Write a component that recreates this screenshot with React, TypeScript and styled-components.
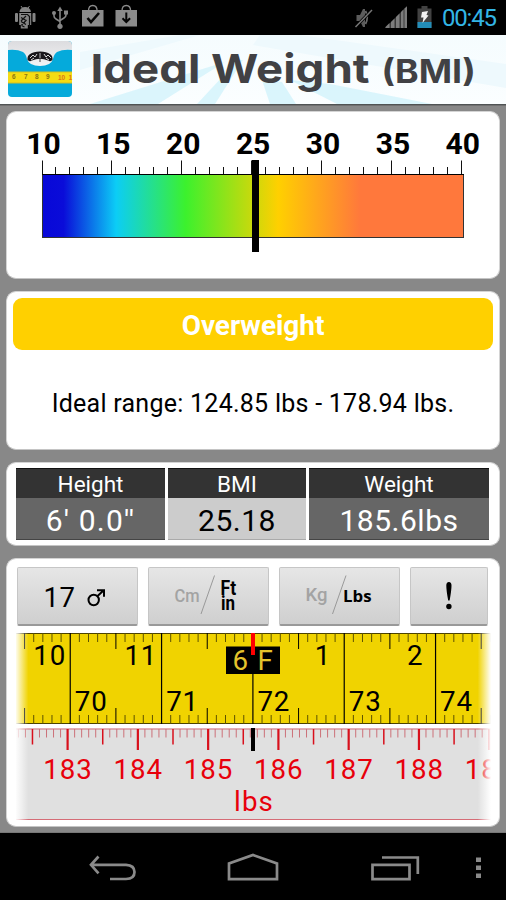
import React from "react";
import styled, { createGlobalStyle, css } from "styled-components";

const Global = createGlobalStyle`
  * { box-sizing: border-box; }
  body { margin: 0; background: #000; font-family: Roboto, "Noto Sans", sans-serif; }
  svg { display: block; flex: none; }
`;

const Screen = styled.div`
  width: 506px;
  height: 900px;
  display: flex;
  flex-direction: column;
  overflow: hidden;
  background: #000;
`;

const StatusBar = styled.header`
  height: 35px;
  flex: none;
  display: flex;
  justify-content: space-between;
`;

const Clock = styled.span`
  font-size: 24px;
  line-height: 36px;
  letter-spacing: -1.2px;
  color: #33b5e5;
  width: 64px;
`;

const StatusGroup = styled.div`
  display: flex;
`;

const TitleBar = styled.div`
  height: 70px;
  flex: none;
`;

const Content = styled.main`
  height: 728px;
  flex: none;
  background: #888;
  border-top: 1px solid #707070;
  border-bottom: 1px solid #777;
  padding: 5px 6px 0;
  display: flex;
  flex-direction: column;
  gap: 12px;
`;

const Panel = styled.section<{ $height: number }>`
  height: ${(p) => p.$height}px;
  flex: none;
  background: #fff;
  border: 1px solid #d4d4d4;
  border-bottom-color: #c4c4c4;
  border-radius: 10px;
  overflow: hidden;
`;

const Verdict = styled.div`
  margin: 6px 6px 0;
  height: 52px;
  border-radius: 9px;
  background: #ffd000;
  color: #fff;
  font-size: 28px;
  font-weight: 700;
  line-height: 56px;
  letter-spacing: -0.05px;
  text-align: center;
`;

const RangeText = styled.p`
  margin: 39px 0 0;
  font-size: 25px;
  line-height: 30px;
  letter-spacing: 0.26px;
  text-align: center;
  white-space: nowrap;
  color: #000;
`;

const Readings = styled.div`
  display: grid;
  grid-template-columns: 149px 138px 180px;
  column-gap: 3px;
  padding: 5px 0 0 9px;
`;

const Reading = styled.div<{ $light?: boolean }>`
  height: 72px;
  text-align: center;
  border-bottom: 1px solid #444;
  background: ${(p) => (p.$light ? "#ccc" : "#666")};
  color: ${(p) => (p.$light ? "#000" : "#fff")};
  ${(p) => p.$light && css`border-bottom-color: #aaa;`}
`;

const ReadingLabel = styled.div`
  height: 30px;
  background: #333;
  border-top: 1px solid #111;
  color: #fff;
  font-size: 22.5px;
  line-height: 31px;
`;

const ReadingValue = styled.div<{ $spacing: number }>`
  font-size: 30px;
  line-height: 46px;
  letter-spacing: ${(p) => p.$spacing}px;
`;

const Buttons = styled.div`
  display: grid;
  grid-template-columns: 121px 121px 121px 78px;
  column-gap: 10px;
  padding: 8px 0 0 10px;
  height: 73px;
`;

const Button = styled.button`
  height: 59px;
  padding: 0;
  border: 1px solid #c6c6c6;
  border-bottom: 2px solid #999;
  border-radius: 2px;
  background: linear-gradient(#e6e6e6, #cfcfcf);
  font-family: inherit;
`;

const Rulers = styled.div`
  padding-left: 9px;
  display: flex;
  flex-direction: column;
  gap: 3px;
`;

const NavBar = styled.nav`
  height: 67px;
  flex: none;
`;

const range = (n: number) => Array.from({ length: n }, (_, i) => i);

type LabelProps = React.SVGProps<SVGTextElement> & { left: number; base: number; stretch?: number };

/* Text with its baseline start at (left, base), stretched horizontally. */
const Label = ({ left, base, stretch = 1, ...rest }: LabelProps) => (
  <text transform={`translate(${left} ${base}) scale(${stretch} 1)`} {...rest} />
);

const StatusIcons = () => (
  <svg width="150" height="35" viewBox="0 0 150 35">
    <g fill="#858585" stroke="#858585">
      <path d="M19.500 12a5.700 5 0 0 1 11.400 0z" stroke="none" />
      <path d="M21 6l2 3M29.500 6l-2 3" strokeWidth="1" />
      <rect x="15" y="13" width="3" height="9" rx="1" stroke="none" />
      <rect x="32.500" y="13" width="3" height="9" rx="1" stroke="none" />
      <path d="M19.200 13h12v12H27.800v3.500h-7V25h-1.600z" stroke="none" />
      <path d="M21 14.500h6.500l2 2V27M21 17.500l5 3M21 21.500l5 3M26 16l-5 5M26.500 20l-5 5M21.500 25.500l3 1.500" fill="none" stroke="#101010" strokeWidth="1.200" />
      <path d="M60 9v17M54 12v4q0 2 2 3l4 2.500M66 12v3q0 2-2 3l-4 2.500" fill="none" strokeWidth="1.600" />
      <path d="M57.300 11L60 6.500l2.700 4.500z" stroke="none" />
      <circle cx="54" cy="13" r="2" stroke="none" />
      <rect x="64" y="10.500" width="4" height="4" stroke="none" />
      <circle cx="60" cy="26.300" r="2.600" stroke="none" />
    </g>
    {[82, 115.5].map((x) => (
      <g key={x}>
        <rect x={x} y="10" width="21.500" height="16.500" fill="#8b8b8b" />
        <path d={`M${x + 6.5} 11q0-5.500 4.300-5.500t4.300 5.500`} fill="none" stroke="#8b8b8b" strokeWidth="1.3" />
      </g>
    ))}
    <path d="M87.500 18l3.500 4 8-9" fill="none" stroke="#050505" strokeWidth="2.600" />
    <path d="M126.300 12.500v8.500M122.500 18.300l3.800 3.700 3.800-3.700" fill="none" stroke="#050505" strokeWidth="2" />
  </svg>
);

const SignalIcons = () => (
  <svg width="92" height="35" viewBox="350 0 92 35">
    <path d="M356.500 15h3.500l3-6h2v18h-2l-3-6h-3.500z" fill="#5c5c5c" />
    <path d="M365.500 11q3.500 6.500 0 13" fill="none" stroke="#6a6a6a" strokeWidth="1.800" />
    <path d="M355.500 27L372 10" stroke="#000" strokeWidth="3" />
    <path d="M355.500 27L372 10" stroke="#777" strokeWidth="1.500" />
    <path d="M385 28L407 6v22z" fill="#3a3a3a" />
    <path d="M385.500 28v-1l4-4v5zM391 28v-6l3.500-3.500V28zM396 28V17l3.500-3.500V28zM401 28V12l2.500-2.500V28zM404.500 28V8.500L407 6.500V28z" fill="#7c7c7c" />
    <path d="M417.500 8.500h4V6h6v2.500h4V28h-14z" fill="#424242" />
    <rect x="417.500" y="22" width="14" height="6" fill="#238db8" />
    <path d="M422 12l6-1-1.500 4 2 .5-6 7.500 1-5.500h-2.500z" fill="#f2f2f2" />
  </svg>
);

const TitleArt = () => (
  <svg width="506" height="70" viewBox="0 35 506 70">
    <defs>
      <linearGradient id="sky" x1="0" y1="0" x2="0" y2="1">
        <stop offset="0" stopColor="#f5fcfe" />
        <stop offset="1" stopColor="#fbfeff" />
      </linearGradient>
      <linearGradient id="scaleTop" x1="0" y1="0" x2="0" y2="1">
        <stop offset="0" stopColor="#dcdcdf" />
        <stop offset="1" stopColor="#f4f4f5" />
      </linearGradient>
      <clipPath id="scaleClip"><rect x="8" y="41" width="64" height="56" rx="4" /></clipPath>
    </defs>
    <rect y="35" width="506" height="70" fill="url(#sky)" />
    <path d="M225 62L90 104h68l70-44z" fill="#d3f3fb" opacity=".8" />
    <path d="M238 60L197 104h18L243 60zM262 80l8 24h26L282 82zM290 80L337 104h95L330 84z" fill="#d3f3fb" opacity=".85" />
    <path d="M200 35L80 70V52L180 35zM253 45L506 88V64L300 35h-40z" fill="#eef9fd" />
    <g clipPath="url(#scaleClip)">
      <rect x="8" y="41" width="64" height="56" fill="#05aadb" />
      <path d="M8 41h64v9q-9-1-15 2-3 2-4 7-2 7-13 7t-13-7q-1-5-4-7-6-3-15-2z" fill="url(#scaleTop)" />
      <path d="M27.500 60q-1-8 12.500-8.500 13.500.5 12.500 8.500-2 2-4.500.5-8-3.500-16 0-2.500 1.500-4.500-.5z" fill="#1a171b" />
      <path d="M30 58l3-3 2 2 2-3M44 54l2 3 2-2 3 3M31 60l3-2M46 58l3 2" fill="none" stroke="#eee" strokeWidth=".9" />
      <path d="M40 53v5" stroke="#eee" strokeWidth=".8" />
      <path d="M40 58v4" stroke="#222" strokeWidth=".8" />
      <rect x="8" y="72" width="64" height="11" fill="#f5dc14" />
      <path d="M8 72h64M8 83h64" stroke="#d2bd22" strokeWidth="1" />
    </g>
    <g fontFamily="Liberation Sans" fontWeight="700" fontSize="6.500" fill="#8b7615">
      <text x="12" y="79">6</text><text x="24" y="79">7</text><text x="35" y="79">8</text><text x="46" y="79">9</text>
      <text x="58" y="79.500" fill="#dc761b">10</text><text x="68.500" y="79.500" fill="#dc761b">1</text>
    </g>
    <g fontFamily="Inter, sans-serif" fontWeight="700" fill="#414144" style={{ fontFeatureSettings: '"cv11"' }}>
      <Label left={90.5} base={83.3} stretch={1.14} fontSize="40">Ideal Weight</Label>
      <Label left={381.5} base={83.3} stretch={1.12} fontSize="32">(BMI)</Label>
    </g>
    <path d="M0 104.500h506" stroke="#4f5354" strokeWidth="1" />
  </svg>
);

const BmiScale = () => (
  <svg width="492" height="166" viewBox="7 112 492 166">
    <defs>
      <linearGradient id="bmi" x1="0" x2="1" y1="0" y2="0">
        <stop offset="0" stopColor="#0808d8" />
        <stop offset=".05" stopColor="#0a0cd9" />
        <stop offset=".175" stopColor="#0ccdf6" />
        <stop offset=".34" stopColor="#3cf12d" />
        <stop offset=".56" stopColor="#ffd000" />
        <stop offset=".755" stopColor="#ff783c" />
        <stop offset="1" stopColor="#ff783c" />
      </linearGradient>
    </defs>
    {range(7).map((i) => (
      <text key={i} x={43.4 + i * 69.9} y="154" fontSize="30" fontWeight="700" textAnchor="middle">{10 + i * 5}</text>
    ))}
    <rect x="42.500" y="174.500" width="421" height="63" fill="url(#bmi)" stroke="#333" strokeWidth="1" />
    <path d="M42 174.500h422" stroke="#000" strokeWidth="1.200" />
    {range(31).map((i) => (
      <path key={i} d={`M${Math.floor(43 + i * 13.97) - 0.5} ${i % 5 ? 167 : 160.5}V174`} stroke="#111" strokeWidth="1" />
    ))}
    <rect x="252" y="160" width="7" height="92" />
  </svg>
);

const RulerFade = ({ id, y }: { id: string; y: number }) => (
  <>
    <defs>
      <linearGradient id={id} x1="0" x2="1" y1="0" y2="0">
        <stop offset="0" stopColor="#fff" />
        <stop offset=".028" stopColor="#fff" stopOpacity="0" />
        <stop offset=".972" stopColor="#fff" stopOpacity="0" />
        <stop offset="1" stopColor="#fff" />
      </linearGradient>
    </defs>
    <rect x="15" y={y} width="476" height="94" fill={`url(#${id})`} />
  </>
);

const HeightTape = () => (
  <svg width="475" height="93" viewBox="16 632 475 93">
    <rect x="16" y="633" width="475" height="91" fill="#f0d300" />
    <path d="M16 633.500h475M16 723.500h475" stroke="#4b4200" strokeWidth="1" />
    {range(53).map((i) => {
      const k = i - 26;
      const x = 252.900 + k * 9.133;
      if (k % 10 === 0) return <path key={i} d={`M${x} 633V724`} stroke="#000" strokeWidth="1.200" />;
      const l = k % 5 === 0 ? 16 : 9;
      return <path key={i} d={`M${x} 633v${l}M${x} 724v${-l}`} stroke={l === 16 ? "#000" : "#5d5200"} strokeWidth="1" />;
    })}
    <g fontSize="27.700" letterSpacing=".8">
      <text x="33.300" y="665">10</text>
      <text x="124.500" y="665">11</text>
      <text x="314.800" y="665">1</text>
      <text x="407" y="665">2</text>
      {range(5).map((i) => (
        <text key={i} x={74.800 + i * 91.330} y="710.700">{70 + i}</text>
      ))}
    </g>
    <rect x="226" y="646.500" width="54" height="27.500" />
    <g fontSize="27.700" fill="#e4c32c">
      <text x="232.500" y="669.500">6</text>
      <text x="257.500" y="669.500">F</text>
    </g>
    <rect x="251" y="633" width="4" height="22" fill="#f00" />
    <RulerFade id="tapeFade" y={632} />
  </svg>
);

const WeightRuler = () => (
  <svg width="475" height="92" viewBox="16 728 475 92">
    <rect x="16" y="728.500" width="475" height="91" fill="#e0e0e0" />
    <path d="M16 729h475M16 819.500h475" stroke="#d56c76" strokeWidth="1" />
    {range(69).map((i) => {
      const k = i - 7;
      const x = 67.600 + k * 7.027;
      const l = k % 10 === 0 ? 21 : k % 5 === 0 ? 15.500 : 8.500;
      return <path key={i} d={`M${x} 729v${l}`} stroke={l > 9 ? "#d8101c" : "#cc7078"} strokeWidth={l === 21 ? 2.2 : l > 9 ? 1.500 : 1} />;
    })}
    <g fontSize="27.700" fill="#e8000b" textAnchor="middle" letterSpacing="1">
      {range(7).map((i) => (
        <text key={i} x={68 + i * 70.270} y="778.700">{183 + i}</text>
      ))}
      <text x="254" y="810.500" letterSpacing="1.100">lbs</text>
    </g>
    <rect x="251" y="728" width="4" height="23" />
    <RulerFade id="weightFade" y={727} />
  </svg>
);

const Male = () => (
  <svg width="119" height="56" viewBox="18 568 119 56">
    <text x="43.500" y="606.500" fontSize="27.500" letterSpacing=".6">17</text>
    <circle cx="93.700" cy="600" r="5.200" fill="none" stroke="#000" strokeWidth="2" />
    <path d="M97.300 596.300L103.500 590.500M97 590.300h7v6.500" fill="none" stroke="#000" strokeWidth="2" />
  </svg>
);

const HeightUnits = () => (
  <svg width="119" height="56" viewBox="149 568 119 56">
    <Label left={174.5} base={601.5} stretch={0.89} fontSize="18.500" fontWeight="500" fill="#a3a3a3">Cm</Label>
    <path d="M201 614l13.500-38.500" stroke="#999" strokeWidth="1" />
    <Label left={220.5} base={595} stretch={0.9} fontSize="19.500" fontWeight="700">Ft</Label>
    <Label left={221} base={610} stretch={0.87} fontSize="19.500" fontWeight="700">in</Label>
  </svg>
);

const WeightUnits = () => (
  <svg width="119" height="56" viewBox="280 568 119 56">
    <Label left={305.5} base={600.5} fontSize="18.500" fontWeight="500" fill="#a3a3a3">Kg</Label>
    <path d="M332.500 614L346 575.500" stroke="#999" strokeWidth="1" />
    <Label left={343} base={601.5} stretch={1.02} fontSize="16.500" fontWeight="700" fontFamily="Open Sans, sans-serif">Lbs</Label>
  </svg>
);

const Alert = () => (
  <svg width="76" height="56" viewBox="411 568 76 56">
    <path d="M446.300 585.500a2.600 3.500 0 0 1 5.200 0q0 5-1.900 15h-1.400q-1.900-10-1.900-15z" />
    <circle cx="448.900" cy="606.500" r="2.700" />
  </svg>
);

const NavIcons = () => (
  <svg width="506" height="67" viewBox="0 833 506 67">
    <g fill="none" stroke="#8a8a8a" strokeWidth="2.700">
      <path d="M98.500 856.500L91 864.800l7.500 8.500M91 864.800h35q8.500.4 8.500 7.200t-8.500 7h-16" />
      <path d="M229 879.200V863.500l24-8.500 24 8.500v15.700z" />
      <path d="M372.500 864.800h37v14.400h-37zM382 857.500h35.800V874" />
    </g>
    <path d="M476 857.500h5v4.500h-5zM476 865.500h5v4.500h-5zM476 873.500h5v4.500h-5z" fill="#8a8a8a" />
  </svg>
);

export default function App() {
  return (
    <>
      <Global />
      <Screen>
        <StatusBar>
          <StatusIcons />
          <StatusGroup>
            <SignalIcons />
            <Clock>00:45</Clock>
          </StatusGroup>
        </StatusBar>
        <TitleBar><TitleArt /></TitleBar>
        <Content>
          <Panel $height={168}><BmiScale /></Panel>
          <Panel $height={159}>
            <Verdict>Overweight</Verdict>
            <RangeText>Ideal range: 124.85 lbs - 178.94 lbs.</RangeText>
          </Panel>
          <Panel $height={84}>
            <Readings>
              <Reading>
                <ReadingLabel>Height</ReadingLabel>
                <ReadingValue $spacing={1.15}>6' 0.0''</ReadingValue>
              </Reading>
              <Reading $light>
                <ReadingLabel>BMI</ReadingLabel>
                <ReadingValue $spacing={0.5}>25.18</ReadingValue>
              </Reading>
              <Reading>
                <ReadingLabel>Weight</ReadingLabel>
                <ReadingValue $spacing={0.5}>185.6lbs</ReadingValue>
              </Reading>
            </Readings>
          </Panel>
          <Panel $height={269}>
            <Buttons>
              <Button><Male /></Button>
              <Button><HeightUnits /></Button>
              <Button><WeightUnits /></Button>
              <Button aria-label="Info"><Alert /></Button>
            </Buttons>
            <Rulers>
              <HeightTape />
              <WeightRuler />
            </Rulers>
          </Panel>
        </Content>
        <NavBar><NavIcons /></NavBar>
      </Screen>
    </>
  );
}
